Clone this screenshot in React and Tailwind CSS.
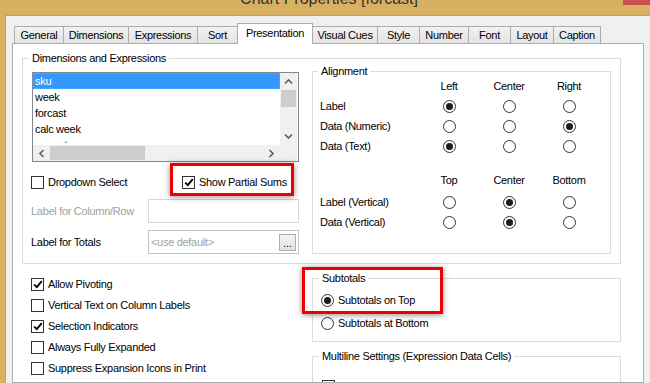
import React from "react";

function Check({ checked }) {
  return (
    <span className="w-[13px] h-[13px] border border-[#333333] bg-white flex items-center justify-center shrink-0">
      {checked && (
        <svg width="10" height="9" viewBox="0 0 10 9">
          <path d="M1.2 4.6 L3.8 7.2 L8.8 1.2" stroke="#000" strokeWidth="1.9" fill="none" />
        </svg>
      )}
    </span>
  );
}

function Radio({ on }) {
  return (
    <span className="w-[13px] h-[13px] rounded-full border border-[#333333] bg-white flex items-center justify-center shrink-0">
      {on && <span className="w-[7px] h-[7px] rounded-full bg-[#1c1c1c]" />}
    </span>
  );
}

function Chevron({ dir }) {
  const vert = dir === "up" || dir === "down";
  const d = {
    up: "M1 5.5 L4.5 2 L8 5.5",
    down: "M1 1.5 L4.5 5 L8 1.5",
    left: "M5.5 1 L2 4.5 L5.5 8",
    right: "M1.5 1 L5 4.5 L1.5 8",
  }[dir];
  return (
    <svg width={vert ? 9 : 7} height={vert ? 7 : 9} viewBox={vert ? "0 0 9 7" : "0 0 7 9"}>
      <path d={d} stroke="#606060" strokeWidth="1.7" fill="none" />
    </svg>
  );
}

const tabs = [
  { t: "General", w: "w-[50px]" },
  { t: "Dimensions", w: "w-[66px]" },
  { t: "Expressions", w: "w-[70px]" },
  { t: "Sort", w: "w-[41px]" },
  { t: "Presentation", w: "w-[76px]", sel: true },
  { t: "Visual Cues", w: "w-[66px]" },
  { t: "Style", w: "w-[43px]" },
  { t: "Number", w: "w-[50px]" },
  { t: "Font", w: "w-[43px]" },
  { t: "Layout", w: "w-[44px]" },
  { t: "Caption", w: "w-[48px]" },
];

function CheckRow({ checked, label }) {
  return (
    <div className="h-[21px] flex items-center gap-[4px]">
      <Check checked={checked} />
      <span>{label}</span>
    </div>
  );
}

export default function App() {
  const alignRows = [
    ["Label", 0],
    ["Data (Numeric)", 2],
    ["Data (Text)", 0],
  ];
  const vRows = [
    ["Label (Vertical)", 1],
    ["Data (Vertical)", 1],
  ];
  return (
    <div className="relative w-[650px] h-[383px] overflow-hidden bg-[#d8b062] flex flex-col font-['Liberation_Sans',Arial,sans-serif] text-[11px] tracking-[-0.3px] text-black">
      {/* title bar */}
      <div className="h-[15px] flex shrink-0 overflow-hidden">
        <div className="flex-1" />
        <div className="pl-[8px] -mt-[9px] text-[16px] leading-[16px] tracking-normal text-[#333333] whitespace-nowrap">
          Chart Properties [forcast]
        </div>
        <div className="flex-1 flex justify-end items-start">
          <div className="w-[27px] h-[5px] bg-[#c75050]" />
        </div>
      </div>

      {/* dialog body */}
      <div className="flex-1 min-h-0 ml-[5px] bg-[#f0f0f0] border-t border-l border-[#bf9f62] flex flex-col">
        {/* tabs */}
        <div className="pt-[7px] shrink-0">
          <div className="h-[20px] pl-[8px] flex items-end relative z-10">
            {tabs.map((tb, i) =>
              tb.sel ? (
                <div
                  key={tb.t}
                  className={`${tb.w} h-[21px] -mb-px -ml-px bg-white border border-b-0 border-[#acacac] flex items-start justify-center pt-[3px] leading-[13px]`}
                >
                  {tb.t}
                </div>
              ) : (
                <div
                  key={tb.t}
                  className={`${tb.w} h-[17px] ${i === 0 ? "" : "-ml-px"} bg-gradient-to-b from-[#f2f2f2] to-[#e3e3e3] border border-b-0 border-[#acacac] flex items-center justify-center leading-[13px]`}
                >
                  {tb.t}
                </div>
              )
            )}
          </div>
        </div>

        {/* panel */}
        <div className="ml-[6px] w-[632px] flex-1 min-h-0 bg-white border border-[#acacac] flex flex-col overflow-hidden">
          {/* Dimensions and Expressions */}
          <fieldset className="ml-[9px] mt-[8px] w-[599px] border border-[#dcdcdc] shrink-0">
            <legend className="ml-[6px] px-[3px] leading-[13px]">Dimensions and Expressions</legend>
            <div className="flex pl-[9px] pr-[9px] pb-[9px]">
              {/* left column */}
              <div className="w-[267px] flex flex-col">
                {/* list box */}
                <div className="mt-[7px] h-[90px] border border-[#828790] grid grid-cols-[247px_17px] grid-rows-[72px_16px] bg-white">
                  <div className="h-[70px] overflow-hidden flex flex-col">
                    <div className="h-[16px] shrink-0 leading-[14px] pl-[1px] bg-[#3399ff] text-white border border-dotted border-[#e0902f]">sku</div>
                    <div className="h-[16px] shrink-0 leading-[14px] pl-[1px] border border-transparent">week</div>
                    <div className="h-[16px] shrink-0 leading-[14px] pl-[1px] border border-transparent">forcast</div>
                    <div className="h-[16px] shrink-0 leading-[14px] pl-[1px] border border-transparent">calc week</div>
                    <div className="h-[16px] shrink-0 leading-[14px] pl-[1px] border border-transparent">current</div>
                  </div>
                  <div className="bg-[#f0f0f0] flex flex-col">
                    <div className="h-[17px] flex items-center justify-center"><Chevron dir="up" /></div>
                    <div className="h-[17px] mx-px bg-[#cdcdcd]" />
                    <div className="flex-1" />
                    <div className="h-[17px] flex items-center justify-center"><Chevron dir="down" /></div>
                  </div>
                  <div className="bg-[#f0f0f0] flex">
                    <div className="w-[17px] flex items-center justify-center"><Chevron dir="left" /></div>
                    <div className="w-[95px] my-px bg-[#cdcdcd]" />
                    <div className="flex-1" />
                    <div className="w-[17px] flex items-center justify-center"><Chevron dir="right" /></div>
                  </div>
                  <div className="bg-[#f0f0f0]" />
                </div>

                {/* checkbox row */}
                <div className="mt-[14px] h-[13px] flex items-center -ml-px">
                  <div className="w-[151px] flex items-center gap-[4px]">
                    <Check />
                    <span>Dropdown Select</span>
                  </div>
                  <div className="flex items-center gap-[4px]">
                    <Check checked />
                    <span>Show Partial Sums</span>
                  </div>
                </div>

                {/* label for column/row */}
                <div className="mt-[10px] h-[24px] flex items-center -ml-px">
                  <span className="w-[117px] text-[#a0a0a0]">Label for Column/Row</span>
                  <div className="w-[151px] h-[24px] border border-[#d9d9d9] bg-white" />
                </div>

                {/* label for totals */}
                <div className="mt-[7px] h-[24px] flex items-center -ml-px">
                  <span className="w-[117px]">Label for Totals</span>
                  <div className="w-[151px] h-[24px] border border-[#c4c4c4] bg-white flex items-center pl-[2px] pr-[2px]">
                    <span className="flex-1 text-[#a0a0a0]">&lt;use default&gt;</span>
                    <div className="w-[17px] h-[17px] border border-[#adadad] bg-gradient-to-b from-[#f2f2f2] to-[#e3e3e3] flex items-end justify-center leading-[12px] pb-[1px] tracking-normal">
                      ...
                    </div>
                  </div>
                </div>
              </div>

              {/* alignment */}
              <fieldset className="ml-[13px] w-[299px] border border-[#dcdcdc]">
                <legend className="ml-[5px] px-[3px] leading-[13px]">Alignment</legend>
                <div className="pl-[7px] grid grid-cols-[99px_60px_60px_60px]">
                  <div className="h-[16px]" />
                  {["Left", "Center", "Right"].map((h) => (
                    <div key={h} className="h-[16px] flex items-center justify-center">{h}</div>
                  ))}
                  <div className="col-span-4 h-[2px]" />
                  {alignRows.map(([l, s]) => (
                    <React.Fragment key={l}>
                      <div className="h-[20px] flex items-center">{l}</div>
                      {[0, 1, 2].map((k) => (
                        <div key={k} className="h-[20px] flex items-center justify-center">
                          <Radio on={k === s} />
                        </div>
                      ))}
                    </React.Fragment>
                  ))}
                  <div className="col-span-4 h-[16px]" />
                  <div className="h-[16px]" />
                  {["Top", "Center", "Bottom"].map((h) => (
                    <div key={h} className="h-[16px] flex items-center justify-center">{h}</div>
                  ))}
                  <div className="col-span-4 h-[4px]" />
                  {vRows.map(([l, s]) => (
                    <React.Fragment key={l}>
                      <div className="h-[20px] flex items-center">{l}</div>
                      {[0, 1, 2].map((k) => (
                        <div key={k} className="h-[20px] flex items-center justify-center">
                          <Radio on={k === s} />
                        </div>
                      ))}
                    </React.Fragment>
                  ))}
                </div>
              </fieldset>
            </div>
          </fieldset>

          {/* bottom section */}
          <div className="flex">
            <div className="ml-[18px] w-[281px] pt-[10px] flex flex-col">
              <CheckRow checked label="Allow Pivoting" />
              <CheckRow label="Vertical Text on Column Labels" />
              <CheckRow checked label="Selection Indicators" />
              <CheckRow label="Always Fully Expanded" />
              <CheckRow label="Suppress Expansion Icons in Print" />
            </div>
            <div className="w-[309px] flex flex-col">
              <fieldset className="mt-[8px] border border-[#dcdcdc] pb-[8px]">
                <legend className="ml-[6px] px-[3px] leading-[13px]">Subtotals</legend>
                <div className="pl-[8px] flex flex-col">
                  <div className="mt-[5px] h-[20px] flex items-center gap-[4px]">
                    <Radio on />
                    <span>Subtotals on Top</span>
                  </div>
                  <div className="mt-[3px] h-[20px] flex items-center gap-[4px]">
                    <Radio />
                    <span>Subtotals at Bottom</span>
                  </div>
                </div>
              </fieldset>
              <fieldset className="mt-[8px] h-[80px] border border-[#dcdcdc]">
                <legend className="ml-[6px] px-[3px] leading-[13px]">Multiline Settings (Expression Data Cells)</legend>
                <div className="pl-[9px] mt-[15px] flex items-center gap-[4px]">
                  <Check />
                  <span>Wrap Header Text</span>
                </div>
              </fieldset>
            </div>
          </div>
        </div>
      </div>

      {/* red highlight overlays */}
      <div className="absolute left-[170px] top-[163px] w-[124px] h-[33px] border-[3px] border-[#ee0000] shadow-[0_1px_6px_rgba(0,0,0,0.45)]" />
      <div className="absolute left-[302px] top-[267px] w-[141px] h-[47px] border-[3px] border-[#ee0000] shadow-[0_1px_6px_rgba(0,0,0,0.45)]" />
    </div>
  );
}
